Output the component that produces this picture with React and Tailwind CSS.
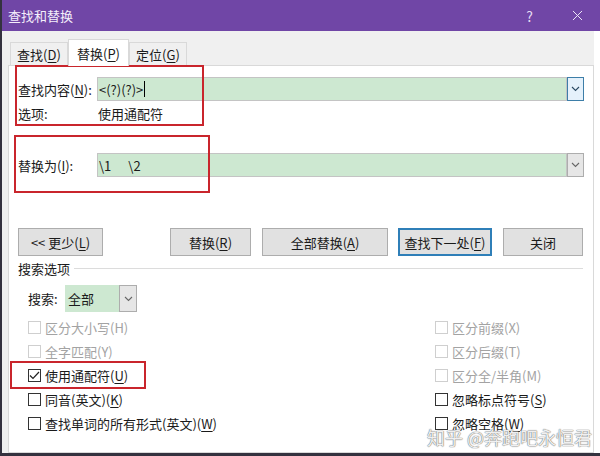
import { X } from 'lucide-react';

// Word "查找和替换" dialog, Replace tab, wildcard options expanded.
const FONT = "font-['Microsoft_YaHei_UI','Noto_Sans_CJK_SC','Noto_Sans',sans-serif]";

function Chevron({ color = '#333' }) {
  return (
    <svg width="9" height="6" viewBox="0 0 9 6" fill="none">
      <path d="M1 1l3.5 3.5L8 1" stroke={color} strokeWidth="1.1" />
    </svg>
  );
}

function Btn({ children, className = '', primary = false }) {
  return (
    <div
      className={`flex h-full items-center justify-center bg-[#e1e1e1] ${
        primary ? 'border-2 border-[#2f7fb8]' : 'border border-[#adadad]'
      } ${className}`}
    >
      {children}
    </div>
  );
}

function Check({ label, u, disabled = false, checked = false }) {
  const parts = u ? label.split(u) : [label];
  return (
    <div className="flex h-[24px] items-center">
      <span
        className={`flex h-[13px] w-[13px] items-center justify-center border bg-white ${
          disabled ? 'border-[#cfcfcf]' : 'border-[#333]'
        }`}
      >
        {checked && (
          <svg width="11" height="9" viewBox="0 0 11 9" fill="none">
            <path d="M1 4.5l3 3L10 1" stroke="#222" strokeWidth="1.2" />
          </svg>
        )}
      </span>
      <span className={`ml-[4px] ${disabled ? 'text-[#a3a3a3]' : 'text-[#1a1a1a]'}`}>
        {u ? (
          <>
            {parts[0]}
            <u className="underline-offset-2">{u}</u>
            {parts[1]}
          </>
        ) : (
          label
        )}
      </span>
    </div>
  );
}

export default function App() {
  return (
    <div
      className={`relative flex h-[456px] w-[600px] flex-col overflow-hidden border-b-[3px] border-l-2 border-[#34323f] bg-white text-[13px] leading-none text-[#1a1a1a] ${FONT}`}
    >
      {/* Title bar */}
      <div className="flex h-[31px] shrink-0 items-center bg-[#7046a6] pl-[6px] text-[13px] text-[#f4eefb]">
        <span>查找和替换</span>
        <span className="ml-auto mr-[36px] text-[14px] text-[#e6dcf3]">?</span>
        <X size={17} strokeWidth={1.4} className="mr-[14px] text-[#efe8f8]" />
      </div>

      <div className="flex min-h-0 flex-1">
        <div className="flex flex-1 flex-col bg-[#f0f0f0] pl-[6px] pt-[8px]">
          {/* Tabs */}
          <div className="z-10 flex h-[26px] items-end pl-[2px]">
            <div className="flex h-[23px] w-[58px] items-center justify-center border border-b-0 border-[#d9d9d9] bg-[#f0f0f0]">
              查找(<u className="underline-offset-2">D</u>)
            </div>
            <div className="-mb-px flex h-[27px] w-[61px] items-center justify-center border border-b-0 border-[#d9d9d9] bg-white">
              替换(<u className="underline-offset-2">P</u>)
            </div>
            <div className="flex h-[23px] w-[58px] items-center justify-center border border-b-0 border-[#d9d9d9] bg-[#f0f0f0]">
              定位(<u className="underline-offset-2">G</u>)
            </div>
          </div>

          {/* Panel */}
          <div className="flex flex-1 flex-col border border-[#d9d9d9] bg-white px-[9px]">
            <div className="mt-[11px] flex h-[24px] items-center">
              <span className="w-[79px]">
                查找内容(<u className="underline-offset-2">N</u>):
              </span>
              <div className="flex h-full flex-1 items-center border border-[#c4c4c4] bg-[#cde8d1] pl-[1px]">
                <span>&lt;(?)(?)&gt;</span>
                <span className="ml-px h-[16px] w-px bg-black" />
              </div>
              <div className="flex h-full w-[17px] items-center justify-center border border-[#3d7ea8] bg-[#e5f1fb]">
                <Chevron color="#2b4a63" />
              </div>
            </div>

            <div className="mt-[2px] flex h-[20px] items-center">
              <span className="w-[80px]">选项:</span>
              <span>使用通配符</span>
            </div>

            <div className="mt-[30px] flex h-[24px] items-center">
              <span className="w-[79px]">
                替换为(<u className="underline-offset-2">I</u>):
              </span>
              <div className="flex h-full flex-1 items-center border border-[#c4c4c4] bg-[#cde8d1] pl-[1px]">
                <span>\1</span>
                <span className="ml-[17px]">\2</span>
              </div>
              <div className="flex h-full w-[17px] items-center justify-center border border-[#adadad] bg-[#e6e6e6]">
                <Chevron color="#666" />
              </div>
            </div>

            {/* Buttons */}
            <div className="mt-[51px] flex h-[28px]">
              <Btn className="w-[85px]">
                &lt;&lt; 更少(<u className="underline-offset-2">L</u>)
              </Btn>
              <Btn className="ml-[67px] w-[81px]">
                替换(<u className="underline-offset-2">R</u>)
              </Btn>
              <Btn className="ml-[11px] w-[126px]">
                全部替换(<u className="underline-offset-2">A</u>)
              </Btn>
              <Btn primary className="ml-[10px] w-[94px]">
                查找下一处(<u className="underline-offset-2">F</u>)
              </Btn>
              <Btn className="ml-[11px] w-[80px]">关闭</Btn>
            </div>

            <div className="mt-[4px] flex h-[16px] items-center pr-px">
              <span>搜索选项</span>
              <div className="ml-[4px] h-px flex-1 bg-[#dcdcdc]" />
            </div>

            <div className="mt-[9px] flex h-[27px] items-center pl-[10px]">
              <span className="w-[37px]">搜索:</span>
              <div className="flex h-full w-[54px] items-center bg-[#cde8d1] pl-[3px]">全部</div>
              <div className="flex h-full w-[18px] items-center justify-center border border-[#adadad] bg-[#e6e6e6]">
                <Chevron color="#666" />
              </div>
            </div>

            <div className="mt-[3px] grid grid-cols-[407px_1fr] pl-[10px]">
              <div className="flex flex-col">
                <Check label="区分大小写(H)" disabled />
                <Check label="全字匹配(Y)" disabled />
                <Check label="使用通配符(U)" u="U" checked />
                <Check label="同音(英文)(K)" u="K" />
                <Check label="查找单词的所有形式(英文)(W)" u="W" />
              </div>
              <div className="flex flex-col">
                <Check label="区分前缀(X)" disabled />
                <Check label="区分后缀(T)" disabled />
                <Check label="区分全/半角(M)" disabled />
                <Check label="忽略标点符号(S)" u="S" />
                <Check label="忽略空格(W)" u="W" />
              </div>
            </div>
          </div>
        </div>
        <div className="w-[6px] bg-white" />
      </div>

      {/* Red annotation boxes */}
      <div className="absolute left-[13px] top-[65px] h-[61px] w-[189px] border-2 border-[#c9252c]" />
      <div className="absolute left-[12px] top-[135px] h-[58px] w-[196px] border-2 border-[#c9252c]" />
      <div className="absolute left-[8px] top-[361px] h-[28px] w-[136px] border-2 border-[#c9252c]" />

      {/* Watermark */}
      <div className="absolute left-[425px] top-[428px] text-[18px] text-white/90 [text-shadow:0_0_1px_#666,0_0_1px_#666]">
        知乎 @奔跑吧永恒君
      </div>
    </div>
  );
}
